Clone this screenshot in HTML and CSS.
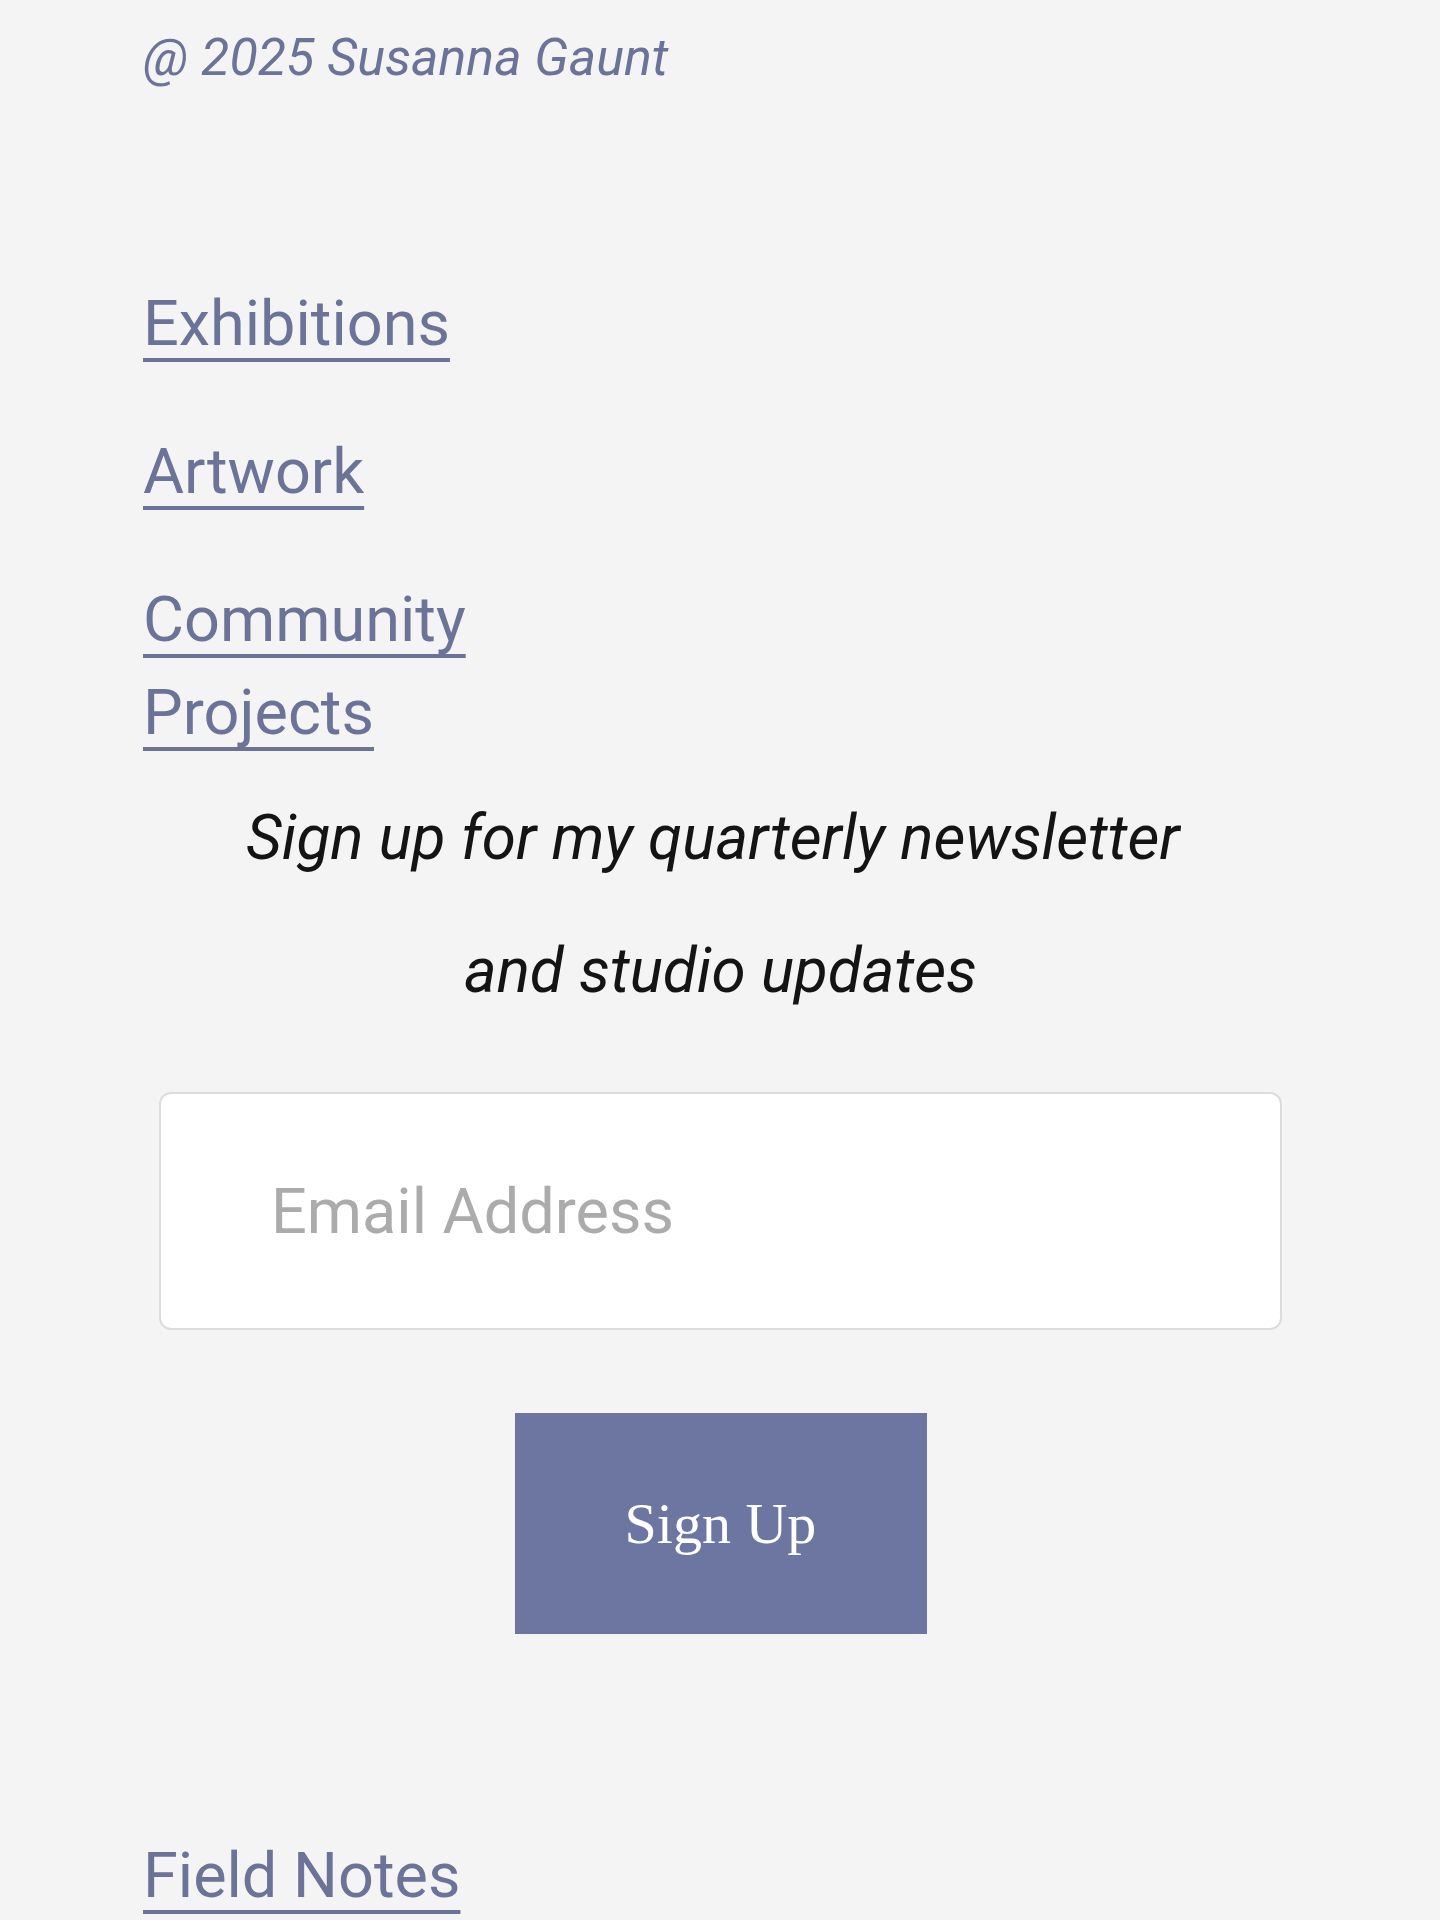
FILE: index.html
```html
<!DOCTYPE html>
<html lang="en">
<head>
  <meta charset="UTF-8">
  <title>Susanna Gaunt</title>
  <meta name="viewport" content="width=device-width, initial-scale=1">
  <link rel="stylesheet" href="styles.css">
</head>
<body>

  <footer class="site-footer">
    <p class="copyright">@ 2025 Susanna Gaunt</p>

    <nav class="footer-nav">
      <a href="#">Exhibitions</a>
      <a href="#">Artwork</a>
      <a href="#">Community Projects</a>
    </nav>

    <form class="newsletter" onsubmit="return false;">
      <p class="newsletter-title">Sign up for my quarterly newsletter&nbsp;<br>and studio updates</p>
      <input type="email" placeholder="Email Address">
      <button type="submit">Sign Up</button>
    </form>

    <nav class="footer-nav bottom-nav">
      <a href="#">Field Notes</a>
    </nav>
  </footer>

</body>
</html>
```

FILE: styles.css
```css
body { margin: 0; background: #f4f4f4; font-family: Roboto, "Noto Sans", sans-serif; }
.site-footer { padding: 28px 143px 0; }

.copyright { margin: 0; font-size: 52px; line-height: 60px; font-style: italic; color: #6b7399; }

.footer-nav { display: flex; flex-direction: column; align-items: flex-start; gap: 55px; max-width: 480px; margin-top: 189px; }
.footer-nav a { font-size: 63px; line-height: 93px; color: #6b7399; text-decoration: underline; text-decoration-thickness: 4px; text-underline-offset: 13px; }
.bottom-nav { margin-top: 195px; }

.newsletter { margin-top: 12px; padding: 0 15px 0 16px; }
.newsletter-title { margin: 0; text-align: center; font-size: 62px; line-height: 133px; font-style: italic; color: #141414; }
.newsletter input { display: block; box-sizing: border-box; width: 100%; height: 238px; margin-top: 55px; padding: 0 110px; border: 2px solid #dcdcdc; border-radius: 12px; background: #fff; font-family: Roboto, sans-serif; font-size: 63px; color: #333; outline: none; }
.newsletter input::placeholder { color: #ababab; }
.newsletter button { display: block; width: 412px; height: 221px; margin: 83px auto 0; border: none; background: #6c76a0; color: #fff; font-family: "Liberation Serif", serif; font-size: 58px; cursor: pointer; }
```
